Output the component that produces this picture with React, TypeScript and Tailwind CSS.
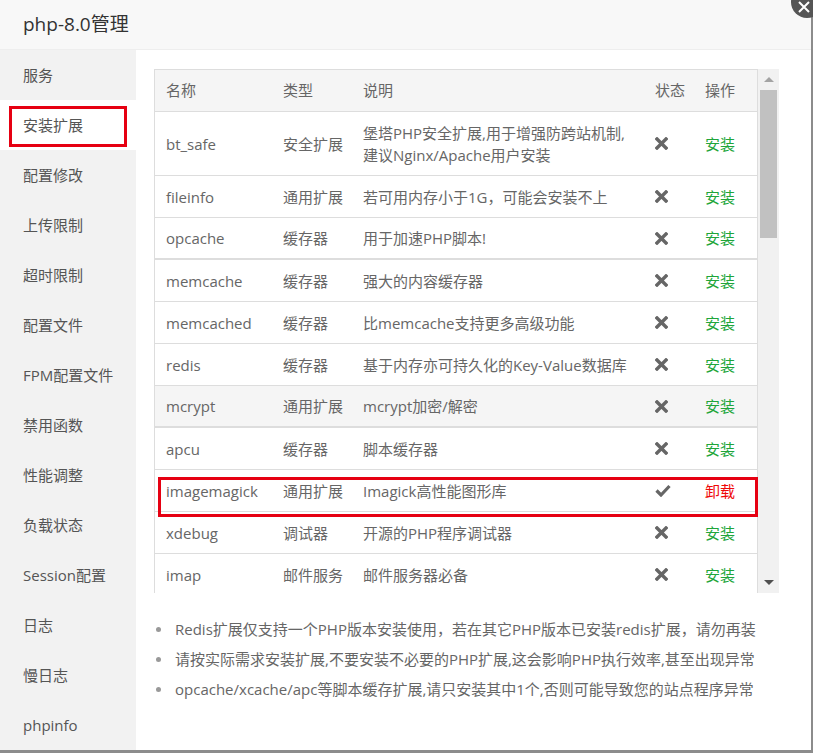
import React from "react"

type Ext = {
   name: string
   type: string
   desc: string[]
   installed?: boolean
   thick?: boolean
   hover?: boolean
}

const menu = ['服务', '安装扩展', '配置修改', '上传限制', '超时限制', '配置文件', 'FPM配置文件', '禁用函数', '性能调整', '负载状态', 'Session配置', '日志', '慢日志', 'phpinfo']

const exts: Ext[] = [
   { name: 'bt_safe', type: '安全扩展', desc: ['堡塔PHP安全扩展,用于增强防跨站机制,', '建议Nginx/Apache用户安装'] },
   { name: 'fileinfo', type: '通用扩展', desc: ['若可用内存小于1G，可能会安装不上'] },
   { name: 'opcache', type: '缓存器', desc: ['用于加速PHP脚本!'], thick: true },
   { name: 'memcache', type: '缓存器', desc: ['强大的内容缓存器'] },
   { name: 'memcached', type: '缓存器', desc: ['比memcache支持更多高级功能'] },
   { name: 'redis', type: '缓存器', desc: ['基于内存亦可持久化的Key-Value数据库'] },
   { name: 'mcrypt', type: '通用扩展', desc: ['mcrypt加密/解密'], thick: true, hover: true },
   { name: 'apcu', type: '缓存器', desc: ['脚本缓存器'] },
   { name: 'imagemagick', type: '通用扩展', desc: ['Imagick高性能图形库'], installed: true },
   { name: 'xdebug', type: '调试器', desc: ['开源的PHP程序调试器'] },
   { name: 'imap', type: '邮件服务', desc: ['邮件服务器必备'] },
]

const notes = [
   'Redis扩展仅支持一个PHP版本安装使用，若在其它PHP版本已安装redis扩展，请勿再装',
   '请按实际需求安装扩展,不要安装不必要的PHP扩展,这会影响PHP执行效率,甚至出现异常',
   'opcache/xcache/apc等脚本缓存扩展,请只安装其中1个,否则可能导致您的站点程序异常',
]

const font = { fontFamily: '"Open Sans", "Noto Sans CJK SC", sans-serif' }

function CrossIcon() {
   return (
      <svg width="13" height="13" viewBox="0 0 13 13">
         <path d="M2 2 L11 11 M11 2 L2 11" stroke="#666" strokeWidth="3.4" strokeLinecap="square" />
      </svg>
   )
}

function CheckIcon() {
   return (
      <svg width="16" height="13" viewBox="0 0 16 13">
         <path d="M1.5 6.5 L6 11 L14.5 2" stroke="#666" strokeWidth="3.2" fill="none" strokeLinejoin="miter" />
      </svg>
   )
}

function App() {
   return (
      <div className="relative w-[813px] h-[753px] bg-[#8c8c8c] overflow-hidden" style={font}>
         <div className="w-[811px] h-[750px] bg-white flex flex-col">
            <div className="h-[50px] shrink-0 bg-[#f8f8f8] border-b border-[#eee] flex items-center px-[23px] text-[19px] text-[#333]">
               php-8.0管理
            </div>

            <div className="flex flex-1 min-h-0">
               <div className="w-[136px] shrink-0 bg-[#f2f2f2]">
                  {menu.map((m, i) => (
                     <div
                        key={m}
                        className={`h-[50px] flex items-center pl-[23px] text-[15px] text-[#555] ${i === 1 ? 'bg-white' : ''}`}
                     >{m}</div>
                  ))}
               </div>

               <div className="flex-1 pl-[18px] pt-[19px]">
                  <div className="flex w-[625px] h-[524px] overflow-hidden">
                     <div className="w-[604px] border-l border-r border-t border-[#ddd] text-[15px] text-[#666]">
                        <div className="grid grid-cols-[116px_80px_292px_50px_64px] h-[42px] items-center bg-[#f5f5f5] border-b border-[#ddd]">
                           <span className="pl-[11px]">名称</span>
                           <span className="pl-[12px]">类型</span>
                           <span className="pl-[12px]">说明</span>
                           <span className="pl-[12px]">状态</span>
                           <span className="pl-[12px]">操作</span>
                        </div>
                        {exts.map(e => (
                           <div
                              key={e.name}
                              className={`grid grid-cols-[116px_80px_292px_50px_64px] items-center leading-[22px] border-[#ddd] ${e.desc.length > 1 ? 'h-[64px]' : 'h-[42px]'} ${e.thick ? 'border-b-2' : 'border-b'} ${e.hover ? 'bg-[#f5f5f5]' : ''}`}
                           >
                              <span className="pl-[11px]">{e.name}</span>
                              <span className="pl-[12px]">{e.type}</span>
                              <div className="pl-[12px]">
                                 {e.desc.map(d => <div key={d}>{d}</div>)}
                              </div>
                              <span className="pl-[12px] flex">{e.installed ? <CheckIcon /> : <CrossIcon />}</span>
                              <span className={`pl-[12px] ${e.installed ? 'text-[#ef0808]' : 'text-[#20a53a]'}`}>{e.installed ? '卸载' : '安装'}</span>
                           </div>
                        ))}
                     </div>

                     <div className="w-[21px] shrink-0 bg-[#f1f1f1] flex flex-col items-center">
                        <div className="h-[21px] flex items-center justify-center">
                           <div className="w-0 h-0 border-l-[5px] border-r-[5px] border-b-[5px] border-l-transparent border-r-transparent border-b-[#a3a3a3]" />
                        </div>
                        <div className="w-[17px] h-[148px] bg-[#c1c1c1]" />
                        <div className="flex-1" />
                        <div className="h-[21px] flex items-center justify-center">
                           <div className="w-0 h-0 border-l-[5px] border-r-[5px] border-t-[5px] border-l-transparent border-r-transparent border-t-[#505050]" />
                        </div>
                     </div>
                  </div>

                  <ul className="mt-[21px] text-[15px] text-[#666]">
                     {notes.map(n => (
                        <li key={n} className="flex items-center gap-[14px] py-[4px] leading-[22px]">
                           <span className="w-[5px] h-[5px] shrink-0 rounded-full bg-[#999] ml-[2px]" />
                           <span>{n}</span>
                        </li>
                     ))}
                  </ul>
               </div>
            </div>
         </div>

         <div className="absolute left-[9px] top-[106px] w-[118px] h-[41px] border-[3px] border-[#e60012]" />
         <div className="absolute left-[158px] top-[477px] w-[600px] h-[40px] border-[3px] border-[#e60012]" />

         <div className="absolute -right-[10px] -top-[14px] w-[32px] h-[32px] rounded-full bg-[#555] flex items-center justify-center">
            <svg width="14" height="14" viewBox="0 0 14 14" className="mt-[10px] -ml-[6px]">
               <path d="M2 2 L12 12 M12 2 L2 12" stroke="#fff" strokeWidth="2" />
            </svg>
         </div>
      </div>
   )
}

export default App
